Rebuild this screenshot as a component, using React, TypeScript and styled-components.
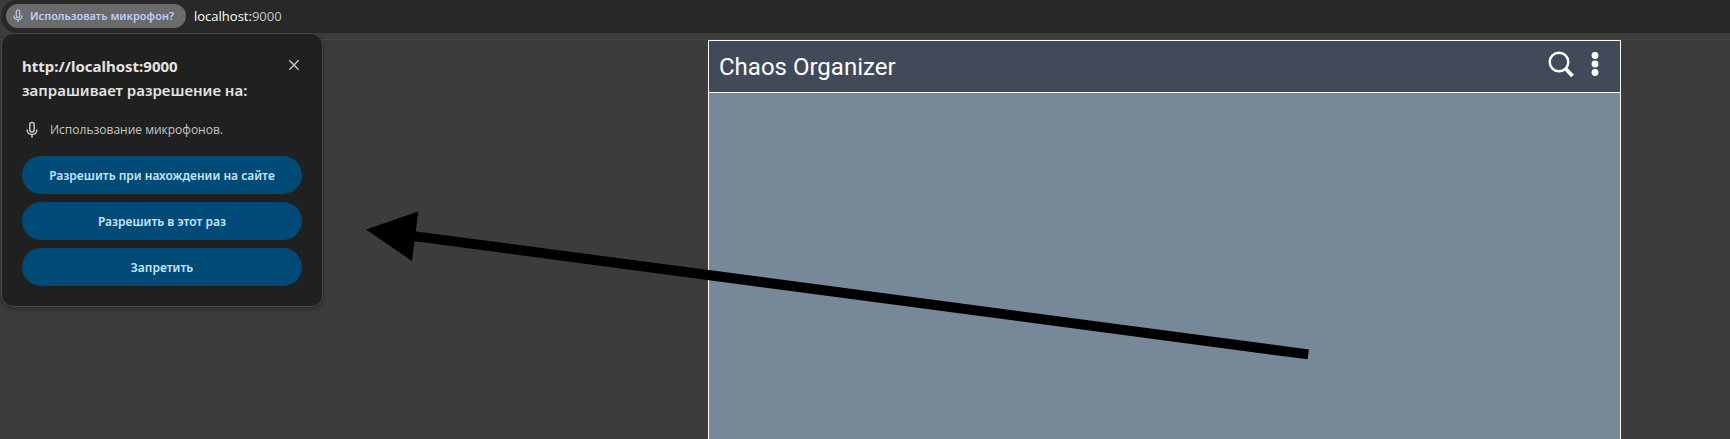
import React from "react";
import styled, { createGlobalStyle } from "styled-components";

const uiFont = '"Noto Sans", "Open Sans", sans-serif';

const GlobalStyle = createGlobalStyle`
  *, *::before, *::after { box-sizing: border-box; }
  body { margin: 0; background: #3c3c3c; }
  button { font: inherit; cursor: pointer; }
`;

const Screen = styled.div`
  position: relative;
  display: flex;
  flex-direction: column;
  min-height: 100vh;
  overflow: hidden;
  font-family: ${uiFont};
`;

const AddressBar = styled.header`
  display: flex;
  align-items: center;
  gap: 8px;
  height: 33px;
  margin-left: 1px;
  padding: 0 5px 1px;
  background: #282828;
  border-radius: 16px 0 0 16px;
`;

const PermissionChip = styled.button`
  display: flex;
  align-items: center;
  gap: 4px;
  width: 180px;
  height: 24px;
  padding: 0 4px;
  border: 0;
  border-radius: 12px;
  background: #6b6b6b;
  color: #b8cffb;
  font-size: 11px;
  font-weight: 600;
  line-height: 16px;
  white-space: nowrap;
`;

const Address = styled.span`
  color: #fff;
  font-family: "Open Sans", sans-serif;
  font-size: 13px;
  line-height: 18px;
`;

const Port = styled.span`
  color: #c7c7c7;
`;

const Viewport = styled.main`
  flex: 1;
  display: grid;
  grid-template-columns: 708fr 913fr 109fr;
  margin-top: 6px;
  border-top: 1px solid #474747;
`;

const Organizer = styled.section`
  grid-column: 2;
  display: flex;
  flex-direction: column;
  border: 1px solid #fff;
  border-bottom: 0;
  background: #778899;
`;

const OrganizerHeader = styled.div`
  display: flex;
  align-items: center;
  justify-content: space-between;
  height: 52px;
  padding: 0 11px 0 10px;
  border-bottom: 1px solid #fff;
  background: #414a59;
`;

const Title = styled.h1`
  margin: 0;
  color: #fff;
  font-family: Roboto, sans-serif;
  font-size: 24px;
  font-weight: 400;
  line-height: 28px;
`;

const Actions = styled.div`
  display: flex;
  align-items: center;
  gap: 6px;
  padding-bottom: 6px;
`;

const IconButton = styled.button<{ $width: number; $height: number }>`
  display: grid;
  place-items: center;
  width: ${({ $width }) => $width}px;
  height: ${({ $height }) => $height}px;
  padding: 0;
  border: 0;
  background: none;
  color: inherit;
`;

const PermissionDialog = styled.section`
  position: absolute;
  top: 33px;
  left: 1px;
  display: flex;
  flex-direction: column;
  width: 322px;
  padding: 20px;
  border: 1px solid #474747;
  border-radius: 12px;
  background: #202020;
  box-shadow: 0 2px 4px rgba(0, 0, 0, 0.3);
`;

const DialogHeader = styled.div`
  display: flex;
  align-items: flex-start;
  justify-content: space-between;
  color: #e3e3e3;
`;

const DialogTitle = styled.h2`
  margin: 0;
  font-size: 15px;
  font-weight: 600;
  line-height: 24px;
`;

const Origin = styled.span`
  display: block;
  font-weight: 700;
`;

const Request = styled.div`
  display: flex;
  align-items: center;
  gap: 8px;
  margin: 18px 0 16px;
  color: #c7c7c7;
  font-family: "Open Sans", sans-serif;
  font-size: 12px;
  line-height: 20px;
`;

const Choices = styled.div`
  display: flex;
  flex-direction: column;
  gap: 8px;
`;

const Choice = styled.button`
  height: 38px;
  padding: 2px 12px 0;
  border: 0;
  border-radius: 19px;
  background: #004a77;
  color: #c2e7ff;
  font-size: 12px;
  font-weight: 600;
  line-height: 16px;
`;

const Pointer = styled.svg`
  position: absolute;
  top: 0;
  left: 0;
  pointer-events: none;
`;

const MicIcon = ({ size }: { size: number }) => (
  <svg width={size} height={size} viewBox="0 0 20 20" fill="none" stroke="currentColor" strokeWidth="1.5" aria-hidden="true">
    <rect x="7.800" y="2.500" width="4.400" height="9.500" rx="2.200" />
    <path d="M5 9.500c0 6.600 10 6.600 10 0M10 14.500v3" />
  </svg>
);

const choices = ["Разрешить при нахождении на сайте", "Разрешить в этот раз", "Запретить"];

export default function App() {
  return (
    <Screen>
      <GlobalStyle />
      <AddressBar>
        <PermissionChip>
          <MicIcon size={16} />
          Использовать микрофон?
        </PermissionChip>
        <Address>localhost:<Port>9000</Port></Address>
      </AddressBar>

      <Viewport>
        <Organizer>
          <OrganizerHeader>
            <Title>Chaos Organizer</Title>
            <Actions>
              <IconButton $width={28} $height={28} aria-label="Поиск">
                <svg width="28" height="28" viewBox="0 0 28 28" fill="none" stroke="#fff">
                  <circle cx="12" cy="12" r="9.300" strokeWidth="2.400" />
                  <path d="M18.500 18.500l7 7.500" strokeWidth="3.800" />
                </svg>
              </IconButton>
              <IconButton $width={28} $height={28} aria-label="Меню">
                <svg width="28" height="28" viewBox="0 0 28 28" fill="#fff">
                  <circle cx="14" cy="5.500" r="3.400" />
                  <circle cx="14" cy="14" r="3.400" />
                  <circle cx="14" cy="22.500" r="3.400" />
                </svg>
              </IconButton>
            </Actions>
          </OrganizerHeader>
        </Organizer>
      </Viewport>

      <PermissionDialog role="dialog" aria-labelledby="permission-title">
        <DialogHeader>
          <DialogTitle id="permission-title">
            <Origin>http://localhost:9000</Origin>
            запрашивает разрешение на:
          </DialogTitle>
          <IconButton $width={16} $height={22} aria-label="Закрыть">
            <svg width="16" height="16" viewBox="0 0 16 16" fill="none" stroke="#c7c7c7" strokeWidth="1.400">
              <path d="M3.300 3.300l9.400 9.400M12.700 3.300l-9.400 9.400" />
            </svg>
          </IconButton>
        </DialogHeader>
        <Request>
          <MicIcon size={20} />
          Использование микрофонов.
        </Request>
        <Choices>
          {choices.map((label) => (
            <Choice key={label}>{label}</Choice>
          ))}
        </Choices>
      </PermissionDialog>

      <Pointer width="1309" height="361" viewBox="0 0 1309 361" aria-hidden="true">
        <path d="M366 229.500L418.300 211.500L412 261z" />
        <path d="M410 235.600L1308.300 354.400" stroke="#000" strokeWidth="10" />
      </Pointer>
    </Screen>
  );
}
